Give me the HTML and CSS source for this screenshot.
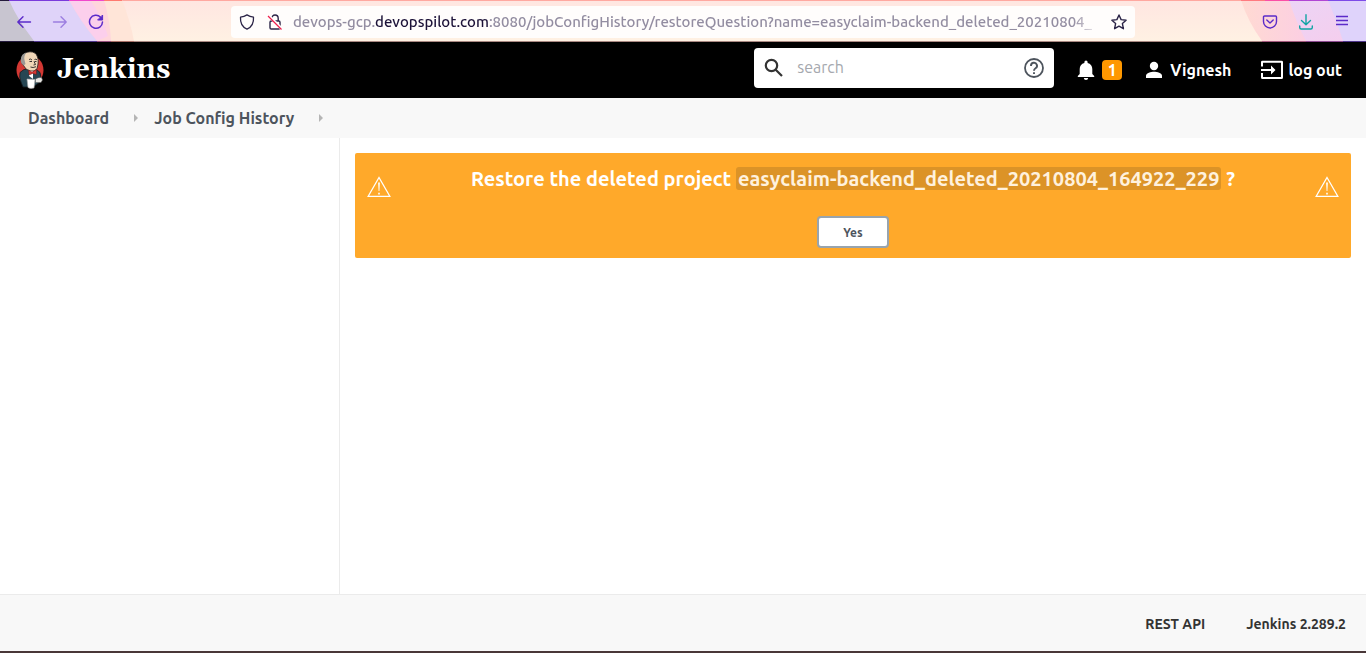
FILE: index.html
```html
<!DOCTYPE html>
<html lang="en">
<head>
<meta charset="utf-8">
<meta name="viewport" content="width=device-width, initial-scale=1">
<title>Job Config History [Jenkins]</title>
<link rel="stylesheet" href="styles.css">
</head>
<body>
<div class="toolbar">
  <svg class="toolbar-art toolbar-art-left" width="140" height="42" viewBox="0 0 140 42" aria-hidden="true">
    <path fill="#ffe5d8" d="M0 0H122Q130 20 134 41H0z"/>
    <path fill="#ffd6dc" d="M0 0H104Q110 20 111 41H0z"/>
    <path fill="#fccfec" d="M69 0H90Q102 16 108 36L97 41Q80 21 69 0z"/>
    <path fill="#dfd3f9" d="M0 0H69Q80 21 97 41H0z"/>
    <path fill="#c8c5d0" d="M0 0H9Q17 19 34 41H0z"/>
    <path fill="#241a3c" d="M0 0H9V1H0z"/>
    <path fill="#7a3bdc" d="M9 0H69V1H9z"/>
    <path fill="#f048cc" d="M69 0H104V1H69z"/>
    <path fill="#ff7a70" d="M104 0H122V1H104z"/>
    <path fill="#241a3c" d="M0 41H34V42H0z"/>
    <path fill="#50368c" d="M34 41H97V42H34z"/>
    <path fill="#96507c" d="M97 41H111V42H97z"/>
    <path fill="#a86f66" d="M111 41H134V42H111z"/>
  </svg>
  <svg class="toolbar-art toolbar-art-right" width="126" height="42" viewBox="0 0 126 42" aria-hidden="true">
    <defs>
      <linearGradient id="blush" x1="0" y1="0" x2="1" y2="0">
        <stop offset="0" stop-color="#ffdad2"/>
        <stop offset=".5" stop-color="#fccfe2"/>
      </linearGradient>
      <linearGradient id="orchid" x1="0" y1="0" x2="1" y2="1">
        <stop offset="0" stop-color="#ecd4f6"/>
        <stop offset="1" stop-color="#f6cdec"/>
      </linearGradient>
    </defs>
    <path fill="url(#blush)" d="M1 0Q8 22 22 41H126V0z"/>
    <path fill="url(#orchid)" d="M49 0Q56 22 66 41H126V0z"/>
    <path fill="#dfd3fb" d="M88 0Q97 22 103 41H126V0z"/>
    <path fill="#ff7a80" d="M1 0H25V1H1z"/>
    <path fill="#fb4fa6" d="M25 0H49V1H25z"/>
    <path fill="#b146d4" d="M49 0H88V1H49z"/>
    <path fill="#7d4be8" d="M88 0H126V1H88z"/>
    <path fill="#a3587c" d="M22 41H66V42H22z"/>
    <path fill="#8c4a90" d="M66 41H103V42H66z"/>
    <path fill="#50368c" d="M103 41H126V42H103z"/>
  </svg>
  <div class="nav-buttons">
    <button class="tool" aria-label="Back">
      <svg width="16" height="16" viewBox="0 0 16 16" fill="none" stroke="#5b2bc9" stroke-width="1.4" stroke-linecap="round" stroke-linejoin="round"><path d="M14.5 8H2M7 2.8L1.8 8L7 13.2"/></svg>
    </button>
    <button class="tool tool-off" aria-label="Forward">
      <svg width="16" height="16" viewBox="0 0 16 16" fill="none" stroke="#5b2bc9" stroke-width="1.4" stroke-linecap="round" stroke-linejoin="round"><path d="M1.5 8H14M9 2.8L14.2 8L9 13.2"/></svg>
    </button>
    <button class="tool" aria-label="Reload">
      <svg width="16" height="16" viewBox="0 0 16 16" fill="none" stroke="#5b2bc9" stroke-width="1.5" stroke-linecap="round"><path d="M12.6 3.2A6.5 6.5 0 1 0 14.5 8"/><path fill="#5b2bc9" stroke-linejoin="round" stroke-width="1" d="M14.6 1.4V6H10z"/></svg>
    </button>
  </div>
  <div class="address">
    <svg class="address-icon" width="16" height="16" viewBox="0 0 16 16" fill="none" stroke="#2b2447" stroke-width="1.3" stroke-linejoin="round"><path d="M8 .9C10.200 2.300 12.300 2.900 14.500 3.200C14.900 9 12.300 13.200 8 15.100C3.700 13.200 1.100 9 1.500 3.200C3.700 2.900 5.800 2.300 8 .9z"/></svg>
    <svg class="address-icon" width="16" height="16" viewBox="0 0 16 16" fill="none"><g stroke="#2b2447" stroke-width="1.4"><rect x="3" y="7" width="10" height="8" rx="1.200"/><path d="M4.800 7V4.500A3.200 3.500 0 0 1 11.200 4.500V7"/></g><path stroke="#fffdfc" stroke-width="3" d="M1.500 1.500L15 15"/><path stroke="#ee1e4e" stroke-width="1.300" d="M1 2L14.500 15.500"/></svg>
    <div class="url" role="textbox" aria-label="Address" tabindex="0">devops-gcp.<span class="url-host">devopspilot.com</span>:8080/jobConfigHistory/restoreQuestion?name=easyclaim-backend_deleted_20210804_</div>
    <button class="tool" aria-label="Bookmark this page">
      <svg width="16" height="16" viewBox="0 0 16 16" fill="none" stroke="#2b2447" stroke-width="1.4" stroke-linejoin="round"><path d="M8 1L10.100 5.600L15.100 6.200L11.400 9.600L12.400 14.700L8 12.200L3.600 14.700L4.600 9.600L.9 6.200L5.900 5.600z"/></svg>
    </button>
  </div>
  <div class="browser-actions">
    <button class="tool" aria-label="Save to Pocket">
      <svg width="16" height="16" viewBox="0 0 16 16" fill="none" stroke="#5b2bc9" stroke-width="1.4" stroke-linecap="round" stroke-linejoin="round"><path d="M2.500 2H13.500Q14.500 2 14.500 3V7.500A6.500 6.500 0 0 1 1.500 7.500V3Q1.500 2 2.500 2zM4.800 6L8 9L11.200 6"/></svg>
    </button>
    <button class="tool" aria-label="Downloads">
      <svg width="16" height="16" viewBox="0 0 16 16" fill="none" stroke="#11a4a4" stroke-width="1.4" stroke-linecap="round" stroke-linejoin="round"><path d="M8 .7V10M3.500 6.500L8 10.700L12.500 6.500M1.700 12V13.500Q1.700 15 3.200 15H12.800Q14.300 15 14.300 13.500V12"/></svg>
    </button>
    <button class="tool" aria-label="Open application menu">
      <svg width="16" height="16" viewBox="0 0 16 16" stroke="#5b2bc9" stroke-width="1.300"><path d="M2 2.500H14M2 6.500H14M2 10.500H14"/></svg>
    </button>
  </div>
</div>

<header class="header">
  <a class="brand" href="#">
    <svg width="28" height="38" viewBox="0 0 28 38" aria-hidden="true">
      <ellipse cx="14" cy="19" rx="13.500" ry="14.500" fill="#d33833"/>
      <path fill="#264653" stroke="#10191f" stroke-width=".8" d="M8 18.500L4 21.500Q3 26 5 31L7 36L17 36L24 31Q25.500 25 24 21.500L20 18z"/>
      <path fill="#f0d6b7" stroke="#231f20" stroke-width=".8" d="M6 6Q8 1 14 .8Q20 .8 21.500 6Q22.800 9 22 13Q22 18 18.500 20Q14 21 10 18Q8 15 6.500 13Q4 10 6 6z"/>
      <path fill="#9a9895" d="M5.300 12Q3.500 5 8.500 2.300L10.500 1.500Q7.500 5 8.500 9L9.500 13L7.500 14.500z"/>
      <path fill="#fff" d="M13 20L17 20L17 28L13 25z"/>
      <path fill="#d33833" stroke="#5c1614" stroke-width=".5" d="M12.500 19L16 21L20.500 18.500V23.500L16.500 22.500L13 24z"/>
      <path fill="none" stroke="#231f20" stroke-width=".9" d="M13 8.500Q14.500 7.300 16 9M18.500 8.500Q20 7.500 21.200 9M13.500 10.500H16M18.500 10.500H20.500M18 10.500L19.500 13.500L17.500 14M14.500 16Q17 17.200 20 15.700"/>
      <path fill="#fff" stroke="#aaa" stroke-width=".6" d="M11 28L19 28.500L18 37Q14 38 12 36.500z"/>
      <path fill="#e6e5e1" stroke="#555" stroke-width=".5" d="M19.500 28Q22 26 25.500 26.500L26.500 29L25 31.500L19.500 31.500z"/>
    </svg>
    <span class="brand-name">Jenkins</span>
  </a>
  <form class="search" role="search">
    <svg width="20" height="20" viewBox="0 0 20 20" fill="none" stroke="#333" stroke-width="2.200" aria-hidden="true"><circle cx="7.500" cy="7.500" r="5.700"/><path d="M11.500 11.500L18 18"/></svg>
    <input class="search-box" type="text" placeholder="search" aria-label="Search">
    <a class="search-help" href="#" aria-label="Search help">
      <svg width="20" height="20" viewBox="0 0 20 20" fill="none" stroke="#4d545d"><circle cx="10" cy="10" r="9" stroke-width="1.800"/><path stroke-width="1.900" d="M7 8A3 3 0 1 1 11.500 10.300Q10 11.200 10 12.800M10 14.200V16"/></svg>
    </a>
  </form>
  <nav class="account">
    <a class="alerts" href="#" aria-label="Notifications">
      <svg width="18" height="20" viewBox="0 0 18 20" fill="#fff" aria-hidden="true"><path d="M9 20A2.200 2.200 0 0 0 11.200 18H6.800A2.200 2.200 0 0 0 9 20zM15.300 14V9Q15.300 4.200 10.600 2.900V2A1.600 1.600 0 0 0 7.400 2V2.900Q2.700 4.200 2.700 9V14L.8 16V17H17.200V16z"/></svg>
      <span class="alert-count">1</span>
    </a>
    <a class="account-link" href="#">
      <svg width="18" height="18" viewBox="0 0 18 18" fill="#fff" aria-hidden="true"><circle cx="9" cy="5" r="4.200"/><path d="M1 17V14.500C1 12 6 10.700 9 10.700S17 12 17 14.500V17z"/></svg>
      Vignesh
    </a>
    <a class="account-link logout" href="#">
      <svg width="22" height="20" viewBox="0 0 22 20" aria-hidden="true"><path fill="none" stroke="#fff" stroke-width="2" d="M1 6.500V2Q1 1.700 1.500 1.700H20.500Q21 1.700 21 2V17.500Q21 18 20.500 18H1.500Q1 18 1 17.500V13"/><path fill="#fff" d="M0 9H10V5.500L14.500 10L10 14.500V11H0z"/></svg>
      log out
    </a>
  </nav>
</header>

<nav class="breadcrumbs" aria-label="Breadcrumb">
  <a href="#">Dashboard</a>
  <span class="crumb-arrow"></span>
  <a href="#">Job Config History</a>
  <span class="crumb-arrow"></span>
</nav>

<div class="body">
  <aside class="side"></aside>
  <main class="main">
    <form class="warning">
      <svg class="warning-sign" width="24" height="22" viewBox="0 0 24 22" fill="none" stroke="#fff" aria-hidden="true"><path stroke-width="1.300" d="M12 1.500L22.800 20.300H1.200z"/><path fill="#fff" stroke="none" d="M11.100 6.500H12.900L12.400 15H11.600zM11.200 16.800H12.800V18.400H11.200z"/></svg>
      <div class="question">
        <h1 class="question-text">Restore the deleted project <code class="job">easyclaim-backend_deleted_20210804_164922_229</code> ?</h1>
        <button class="confirm" type="button">Yes</button>
      </div>
      <svg class="warning-sign" width="24" height="22" viewBox="0 0 24 22" fill="none" stroke="#fff" aria-hidden="true"><path stroke-width="1.300" d="M12 1.500L22.800 20.300H1.200z"/><path fill="#fff" stroke="none" d="M11.100 6.500H12.900L12.400 15H11.600zM11.200 16.800H12.800V18.400H11.200z"/></svg>
    </form>
  </main>
</div>

<footer class="footer">
  <a href="#">REST API</a>
  <a href="#">Jenkins 2.289.2</a>
</footer>
</body>
</html>
```
FILE: styles.css
```css
* { box-sizing: border-box; }

body {
  margin: 0;
  min-height: 100vh;
  display: flex;
  flex-direction: column;
  background: #fff;
  color: #333;
  font-family: Ubuntu, "Noto Sans", "Open Sans", sans-serif;
  font-size: 16px;
}

a { color: inherit; text-decoration: none; }
svg { display: block; flex: none; }

.toolbar {
  position: relative;
  display: flex;
  align-items: center;
  height: 42px;
  padding: 1px 16px 0;
  border-top: 1px solid #ffa8a0;
  border-bottom: 1px solid #a98882;
  background: linear-gradient(#ffe6e1, #fff1e3);
}
.toolbar-art { position: absolute; top: -1px; }
.toolbar-art-left { left: 0; }
.toolbar-art-right { right: 0; }

.nav-buttons, .browser-actions {
  position: relative;
  display: flex;
  gap: 20px;
}
.nav-buttons { width: 215px; }
.browser-actions { margin-left: auto; }
.tool { padding: 0; border: 0; background: none; }
.tool-off { opacity: .5; }

.address {
  position: relative;
  display: flex;
  align-items: center;
  flex: 0 1 904px;
  min-width: 0;
  height: 32px;
  padding: 0 8px;
  border-radius: 4px;
  background: #fffdfc;
}
.address-icon { margin-right: 12px; }
.url {
  flex: 1;
  min-width: 0;
  margin: 0 10px 0 -2px;
  overflow: hidden;
  white-space: nowrap;
  font-size: 15px;
  font-weight: 500;
  color: #938da1;
  mask-image: linear-gradient(to left, transparent, #000 28px);
}
.url-host { color: #1c1238; }

.header {
  display: flex;
  align-items: center;
  min-height: 56px;
  padding: 0 24px 0 16px;
  background: #000;
  color: #fff;
}
.brand { display: flex; align-items: center; gap: 13px; }
.brand-name {
  font: bold 28px/36px Georgia, Gelasio, "DejaVu Serif", serif;
}

.search {
  display: flex;
  align-items: center;
  width: 300px;
  height: 40px;
  margin: 0 23px 4px auto;
  padding: 0 10px;
  border-radius: 4px;
  background: #fff;
}
.search-box {
  flex: 1;
  min-width: 0;
  padding: 0 13px 2px;
  border: 0;
  outline: 0;
  background: none;
  font: 16px/24px Ubuntu, "Noto Sans", "Open Sans", sans-serif;
}
.search-box::placeholder { color: #a5a8ae; }

.account { display: flex; align-items: center; font-weight: 700; }
.alerts { display: flex; align-items: center; gap: 7px; margin-right: 23px; }
.alert-count {
  width: 20px;
  border-radius: 4px;
  background: #ff9800;
  line-height: 20px;
  text-align: center;
}
.account-link { display: flex; align-items: center; gap: 7px; font-size: 16px; }
.logout { margin-left: 30px; gap: 5px; }

.breadcrumbs {
  display: flex;
  align-items: center;
  min-height: 40px;
  padding: 0 28px;
  background: #f8f8f8;
  color: #4d545d;
  font-weight: 700;
}
.crumb-arrow {
  margin: 0 16px 0 25px;
  border: 4px solid transparent;
  border-left-color: #b5b5b5;
  border-right-width: 0;
}

.body { display: flex; flex: 1; }
.side { width: 340px; border-right: 1px solid #ebebeb; }
.main { flex: 1; min-width: 0; padding: 15px; }

.warning {
  display: flex;
  align-items: flex-start;
  padding: 10px 12px;
  border-radius: 2px;
  background: #ffa92a;
  color: #fff;
}
.warning-sign { margin-top: 13px; }
.question { flex: 1; min-width: 0; text-align: center; }
.question-text {
  margin: 0 0 21px;
  font-size: 20px;
  line-height: 32px;
  font-weight: 700;
}
.job {
  padding: 0 2px;
  border-radius: 3px;
  background: #dc9327;
  color: #fff1dd;
  font: inherit;
  line-height: 24px;
}
.confirm {
  width: 72px;
  height: 32px;
  padding: 1px 6px 0;
  border: 2px solid #98a4ae;
  border-radius: 4px;
  background: #fff;
  color: #4d545d;
  font: bold 12px/16px Ubuntu, "Noto Sans", "Open Sans", sans-serif;
}

.footer {
  display: flex;
  align-items: center;
  justify-content: flex-end;
  gap: 41px;
  min-height: 59px;
  padding: 2px 20px 0;
  border-top: 1px solid #ebebeb;
  border-bottom: 2px solid #493738;
  background: #f8f8f8;
  font-size: 14px;
  font-weight: 700;
}
```
